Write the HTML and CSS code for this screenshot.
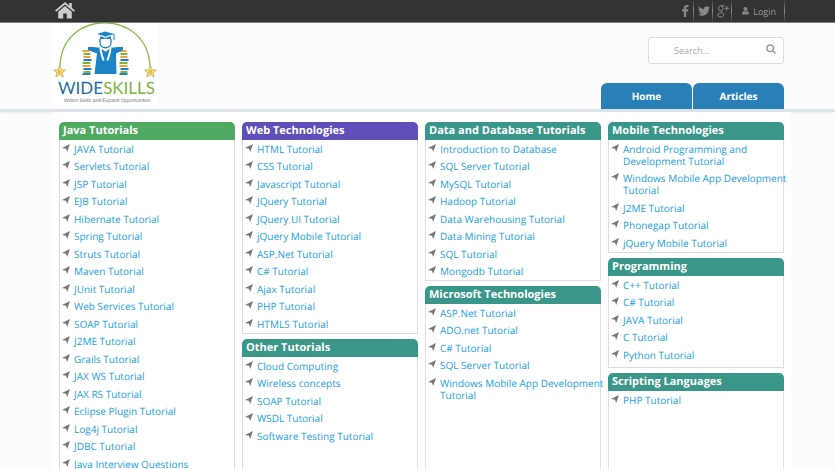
FILE: index.html
```html
<!DOCTYPE html>
<html lang="en">
<head>
  <meta charset="UTF-8">
  <title>Wideskills</title>
  <meta name="viewport" content="width=device-width, initial-scale=1.0">
  <link rel="stylesheet" href="styles.css">
</head>
<body>
  <svg width="0" height="0" class="defs" aria-hidden="true">
    <symbol id="star" viewBox="0 0 12 12">
      <path d="M6 .8 7.5 4.4 11.4 4.7 8.4 7.2 9.4 11 6 8.9 2.6 11 3.6 7.2.6 4.7 4.5 4.4z" fill="#f6e7a0" stroke="#c3b04a" stroke-width=".8"/>
      <circle cx="6" cy="6.4" r="1.9" fill="#f5b62b"/>
    </symbol>
    <symbol id="books" viewBox="0 0 9 25">
      <path d="M0 1h7M1 7h7M0 16h8" stroke="#f0a33a" stroke-width="2"/>
      <path d="M1 4h7M0 13h8M1 22h7" stroke="#7fb241" stroke-width="2"/>
      <path d="M1 10h8M1 19h8M0 24h8" stroke="#1c84c6" stroke-width="2"/>
    </symbol>
  </svg>

  <div class="topbar">
    <a class="home-link" href="#" aria-label="Home">
      <svg width="20" height="17" viewBox="0 0 20 17" fill="#ccc">
        <path d="M10 0 0 8.4l1.3 1.4L10 2.6l8.7 7.2L20 8.4l-3.2-2.7V1h-2.6v2.5z"/>
        <path d="M10 4 3.2 9.7V16.5h5v-5h3.6v5h5V9.7z"/>
      </svg>
    </a>
    <div class="social">
      <a href="#" aria-label="Facebook">
        <svg width="7" height="12" viewBox="0 0 7 12"><path d="M6.5 0v2H5.2c-.8 0-1 .4-1 1v1.2h2.2l-.3 2.2H4.200V12H1.900V6.400H0V4.200h1.900V2.700C1.900.9 3 0 4.700 0z"/></svg>
      </a>
      <a href="#" aria-label="Twitter">
        <svg width="12" height="10" viewBox="0 0 12 10"><path d="M12 1.200c-.4.200-.9.300-1.300.4.500-.3.800-.7 1-1.300-.5.300-1 .5-1.500.6A2.500 2.500 0 0 0 6 3.100C4 3 2.200 2 .9.500.2 1.700.6 3.100 1.600 3.800c-.4 0-.8-.1-1.100-.3 0 1.200.8 2.200 2 2.400-.4.100-.7.100-1.100 0 .3 1 1.200 1.700 2.300 1.700A5 5 0 0 1 0 8.700C4.500 11.500 11 9 10.800 2.500c.5-.3.900-.8 1.200-1.300z"/></svg>
      </a>
      <a href="#" aria-label="Google plus">
        <svg class="outline" width="12" height="13" viewBox="0 0 12 13"><ellipse cx="3.800" cy="3.400" rx="2.200" ry="2.600"/><path d="M7.500.7H4M5 6c-2 1 1.800 1.800 1.800 3.700 0 3-6 3-6 .3 0-1.600 2-2.300 4-2.100M9.700 1v4.600M7.500 3.300H12"/></svg>
      </a>
      <a class="login" href="#">
        <svg width="7" height="8" viewBox="0 0 7 8"><circle cx="3.500" cy="2" r="2"/><path d="M0 7.500C0 5 1 4.200 2 4c1 .7 2 .7 3 0 1 .2 2 1 2 3.500z"/></svg>
        Login
      </a>
    </div>
  </div>

  <header class="header">
    <a class="logo" href="#" aria-label="Wideskills">
      <svg width="106" height="82" viewBox="0 0 106 82">
        <path d="M8 44C9-15 96-15 98 44" fill="none" stroke="#8dba53" stroke-width="1.300"/>
        <use href="#star" x="1" y="42" width="13" height="13"/>
        <use href="#star" x="92" y="42" width="13" height="13"/>
        <use href="#books" x="30" y="27" width="10" height="25"/>
        <use href="#books" x="67" y="27" width="10" height="25"/>
        <path d="M45 11 53 8.500l9.500 2.500-9 2.500zM48 13.200l5.500 1.500 5.500-1.500v3.300c-3-1-8-1-11 0zM61.500 11h1v6h-1z" fill="#1c84c6"/>
        <path d="M48 16v3.500c0 7 11 7 11 0V16" fill="#fff" stroke="#1c84c6" stroke-width="1.300"/>
        <path d="M36 24h5l7 .8 5.500 4 5.500-4 7-.8h5v3l-7 3.500L64.500 51h-22L45 30.500 36 27z" fill="#1c84c6"/>
        <path d="M48.500 25c0 5 2 8 3 12.500M58.500 25c0 5-2 8-3 12.500" fill="none" stroke="#fff" stroke-width="2"/>
        <text x="6" y="71" class="logo-name"><tspan fill="#1e6f9f">WIDE</tspan><tspan fill="#7fb241">SKILLS</tspan></text>
        <text x="12" y="79" class="logo-tag">Widen Skills and Expand Opportunities</text>
      </svg>
    </a>
    <div class="header-right">
      <form class="search">
        <input type="text" placeholder="Search..." aria-label="Search">
        <button type="submit" aria-label="Search">
          <svg width="10" height="10" viewBox="0 0 10 10" fill="none" stroke="#999" stroke-width="1.500"><circle cx="4.200" cy="4.200" r="3.300"/><path d="m6.500 6.500 3 3"/></svg>
        </button>
      </form>
      <nav class="tabs">
        <a href="#">Home</a>
        <a href="#">Articles</a>
      </nav>
    </div>
  </header>

  <main class="content">
    <div class="column">
      <section class="box green">
        <h2>Java Tutorials</h2>
        <ul>
          <li><a href="#">JAVA Tutorial</a></li>
          <li><a href="#">Servlets Tutorial</a></li>
          <li><a href="#">JSP Tutorial</a></li>
          <li><a href="#">EJB Tutorial</a></li>
          <li><a href="#">Hibernate Tutorial</a></li>
          <li><a href="#">Spring Tutorial</a></li>
          <li><a href="#">Struts Tutorial</a></li>
          <li><a href="#">Maven Tutorial</a></li>
          <li><a href="#">JUnit Tutorial</a></li>
          <li><a href="#">Web Services Tutorial</a></li>
          <li><a href="#">SOAP Tutorial</a></li>
          <li><a href="#">J2ME Tutorial</a></li>
          <li><a href="#">Grails Tutorial</a></li>
          <li><a href="#">JAX WS Tutorial</a></li>
          <li><a href="#">JAX RS Tutorial</a></li>
          <li><a href="#">Eclipse Plugin Tutorial</a></li>
          <li><a href="#">Log4j Tutorial</a></li>
          <li><a href="#">JDBC Tutorial</a></li>
          <li><a href="#">Java Interview Questions</a></li>
        </ul>
      </section>
    </div>

    <div class="column">
      <section class="box purple">
        <h2>Web Technologies</h2>
        <ul>
          <li><a href="#">HTML Tutorial</a></li>
          <li><a href="#">CSS Tutorial</a></li>
          <li><a href="#">Javascript Tutorial</a></li>
          <li><a href="#">JQuery Tutorial</a></li>
          <li><a href="#">JQuery UI Tutorial</a></li>
          <li><a href="#">jQuery Mobile Tutorial</a></li>
          <li><a href="#">ASP.Net Tutorial</a></li>
          <li><a href="#">C# Tutorial</a></li>
          <li><a href="#">Ajax Tutorial</a></li>
          <li><a href="#">PHP Tutorial</a></li>
          <li><a href="#">HTML5 Tutorial</a></li>
        </ul>
      </section>
      <section class="box">
        <h2>Other Tutorials</h2>
        <ul>
          <li><a href="#">Cloud Computing</a></li>
          <li><a href="#">Wireless concepts</a></li>
          <li><a href="#">SOAP Tutorial</a></li>
          <li><a href="#">WSDL Tutorial</a></li>
          <li><a href="#">Software Testing Tutorial</a></li>
        </ul>
      </section>
    </div>

    <div class="column">
      <section class="box">
        <h2>Data and Database Tutorials</h2>
        <ul>
          <li><a href="#">Introduction to Database</a></li>
          <li><a href="#">SQL Server Tutorial</a></li>
          <li><a href="#">MySQL Tutorial</a></li>
          <li><a href="#">Hadoop Tutorial</a></li>
          <li><a href="#">Data Warehousing Tutorial</a></li>
          <li><a href="#">Data Mining Tutorial</a></li>
          <li><a href="#">SQL Tutorial</a></li>
          <li><a href="#">Mongodb Tutorial</a></li>
        </ul>
      </section>
      <section class="box">
        <h2>Microsoft Technologies</h2>
        <ul>
          <li><a href="#">ASP.Net Tutorial</a></li>
          <li><a href="#">ADO.net Tutorial</a></li>
          <li><a href="#">C# Tutorial</a></li>
          <li><a href="#">SQL Server Tutorial</a></li>
          <li><a href="#">Windows Mobile App Development Tutorial</a></li>
        </ul>
      </section>
    </div>

    <div class="column">
      <section class="box">
        <h2>Mobile Technologies</h2>
        <ul>
          <li><a href="#">Android Programming and Development Tutorial</a></li>
          <li><a href="#">Windows Mobile App Development Tutorial</a></li>
          <li><a href="#">J2ME Tutorial</a></li>
          <li><a href="#">Phonegap Tutorial</a></li>
          <li><a href="#">jQuery Mobile Tutorial</a></li>
        </ul>
      </section>
      <section class="box">
        <h2>Programming</h2>
        <ul>
          <li><a href="#">C++ Tutorial</a></li>
          <li><a href="#">C# Tutorial</a></li>
          <li><a href="#">JAVA Tutorial</a></li>
          <li><a href="#">C Tutorial</a></li>
          <li><a href="#">Python Tutorial</a></li>
        </ul>
      </section>
      <section class="box">
        <h2>Scripting Languages</h2>
        <ul>
          <li><a href="#">PHP Tutorial</a></li>
        </ul>
      </section>
    </div>
  </main>

  <script>
    // arrow bullet in front of every tutorial link
    document.querySelectorAll('.box li').forEach(function(li) {
      li.insertAdjacentHTML('afterbegin', '<svg width="8" height="8" viewBox="0 0 8 8"><path d="M8 0 5.200 8 4 4.800 0 4z"/></svg>');
    });
  </script>
</body>
</html>
```
FILE: styles.css
```css
* { box-sizing: border-box; }
body { margin: 0; background: #fcfcfc; font-family: "Open Sans", sans-serif; font-size: 10px; text-rendering: geometricPrecision; }
a { text-decoration: none; }
.defs { position: absolute; }

.topbar { display: flex; justify-content: space-between; height: 23px; padding: 0 50px 0 55px; background: #333; border-bottom: 1px solid #777; }
.home-link { padding-top: 2px; }
.social { display: flex; }
.social a { display: flex; align-items: center; height: 22px; padding: 0 2px 0 4px; border-right: 1px solid; border-image: linear-gradient(#333, #888, #333) 1; }
.social a:first-child { padding-right: 4px; }
.social svg { fill: #888; }
.social .outline { fill: none; stroke: #888; stroke-width: 1; }
.social .login { gap: 4px; padding: 0 8px 0 10px; color: #999; font-size: 9px; }

.header { display: flex; justify-content: space-between; height: 89px; padding: 0 51px 0 52px; border-bottom: 3px solid #dde4e8; box-shadow: 0 1px 2px #eee; }
.logo svg { display: block; background: #fff; }
.logo-name { font-family: Lato, sans-serif; font-size: 17px; font-weight: 400; }
.logo-tag { font-family: "Liberation Sans Narrow", "Liberation Sans", sans-serif; font-size: 5px; fill: #777; }
.header-right { display: flex; flex-direction: column; justify-content: space-between; align-items: flex-end; padding-top: 14px; }
.search { display: flex; width: 136px; height: 27px; background: #fff; border: 1px solid #ddd; border-radius: 3px; }
.search input { flex: 1; min-width: 0; padding: 0 0 0 25px; border: 0; background: none; font-family: inherit; font-size: 9px; }
.search input::placeholder { color: #aaa; }
.search button { padding: 0 7px 3px; border: 0; background: none; }
.tabs { display: flex; gap: 1px; }
.tabs a { width: 91px; height: 26px; background: #2980b9; border-radius: 6px 6px 0 0; color: #fff; font-weight: bold; line-height: 26px; text-align: center; }

.content { display: flex; gap: 7px; margin: 0 44px 0 52px; padding: 10px 7px 20px; background: #fff; }
.column { flex: 1; min-width: 0; display: flex; flex-direction: column; gap: 5px; }
.box { display: flex; flex-direction: column; min-height: 110px; }
.box:last-child { flex: 1; }
.box h2 { margin: 0; padding-left: 4px; background: #3a9688; border-radius: 5px 5px 0 0; color: #fff; font-size: 11px; line-height: 18px; }
.green h2 { background: #4ea961; }
.purple h2 { background: #5f4fb8; }
.box ul { flex: 1; margin: 0; padding: 3px 0 0 2px; border: 1px solid #ddd; border-top: 0; list-style: none; }
.box li { display: flex; gap: 4px; margin-bottom: 5px; line-height: 12px; }
.box li:nth-child(even) { margin-bottom: 6px; }
.box li:last-child { margin-bottom: 3px; }
.box li svg { flex: none; margin-top: 1px; fill: #777; }
.box li a { color: #1ba0dc; margin-right: -4px; }
```
